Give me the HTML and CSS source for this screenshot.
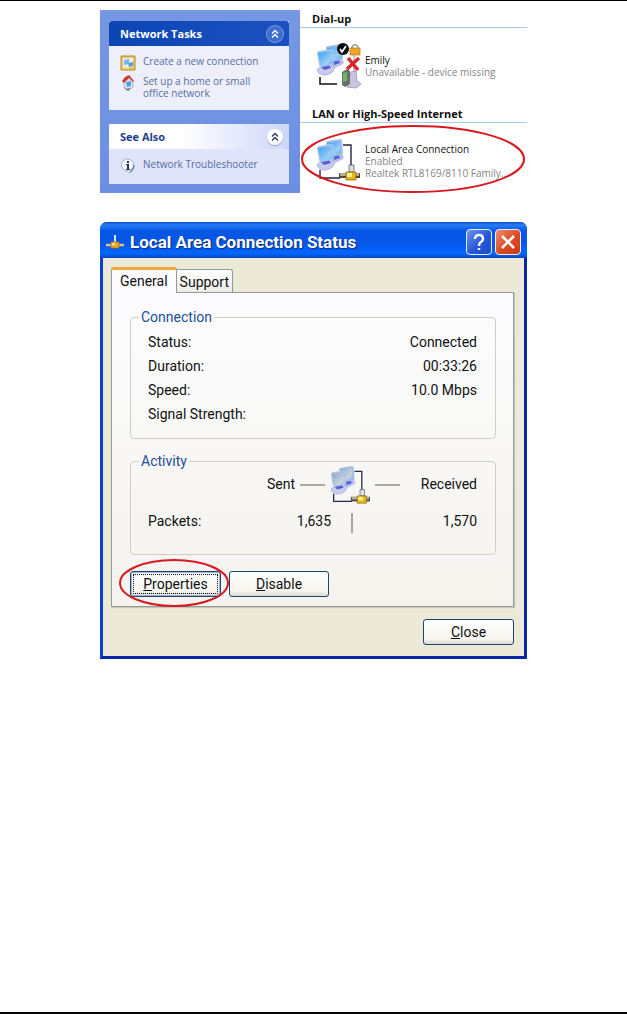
FILE: index.html
```html
<!DOCTYPE html>
<html lang="en">
<head>
<meta charset="utf-8">
<title>Local Area Connection Status</title>
<meta name="viewport" content="width=device-width, initial-scale=1">
<link rel="stylesheet" href="styles.css">
</head>
<body>
<svg class="defs" aria-hidden="true">
  <defs>
    <linearGradient id="shine" x1="0" y1="0" x2="1" y2="1"><stop offset="0" stop-color="#fff" stop-opacity="0"/><stop offset=".7" stop-color="#fff" stop-opacity=".5"/><stop offset="1" stop-color="#fff" stop-opacity=".1"/></linearGradient>
    <symbol id="pcs" viewBox="0 0 46 46">
      <path d="M14 22q0-3 6-4l6-1q4 2 2 5l-8 4z" fill="#b9bdec"/>
      <path d="M17 19l7-1 1 3-6 2z" fill="#5a63d6"/>
      <path d="M11 6q0-2 2-2l12-2q2 0 2 2l1 12q0 2-2 2l-11 2z" fill="#a3bfe6"/>
      <path d="M12 6l13-2 1 12-11 2z" fill="currentColor"/>
      <path d="M12 6l13-2 1 12-11 2z" fill="url(#shine)"/>
      <path d="M2 28q0-2 5-3l9-2q4 1 3 5-2 4-8 5-7 1-9-5z" fill="#c6cbef" stroke="#9aa0d2" stroke-width=".6"/>
      <path d="M6 25l8-2 2 3-7 2z" fill="#5560d2"/>
      <path d="M2 11q0-2 2-2l12-2q2 0 2 2l1 12q0 2-2 2L6 25q-2 0-2-2z" fill="#a9c6ec"/>
      <path d="M3 11l13-2 2 12-12 3z" fill="currentColor"/>
      <path d="M3 11l13-2 2 12-12 3z" fill="url(#shine)"/>
    </symbol>
    <symbol id="plug" viewBox="0 0 46 46">
      <path d="M28 8h8v21M5 33v8h20" fill="none" stroke="#25264a" stroke-width="1.400"/>
      <path d="M34 28h5v7h-5z" fill="#dcdce4" stroke="#555" stroke-width=".7"/>
      <path d="M24 36h21v5H24z" fill="#4d4638"/>
      <path d="M25 36h19v3H25z" fill="#b5ae96"/>
      <path d="M31 35h10v8H31z" fill="#e8b61d" stroke="#80600c" stroke-width=".7"/>
      <path d="M32 36h5v4h-5z" fill="#fff08e"/>
    </symbol>
    <symbol id="chevrons" viewBox="0 0 16 16">
      <path d="M5 7.500l3-3 3 3M5 11.500l3-3 3 3" fill="none" stroke="currentColor" stroke-width="1.400"/>
    </symbol>
  </defs>
</svg>
<main class="page">
  <section class="explorer">
    <aside class="sidebar">
      <section class="card">
        <h2 class="card-title card-title-primary">Network Tasks
          <button class="collapse collapse-primary" aria-label="Collapse Network Tasks"><svg viewBox="0 0 16 16"><use href="#chevrons"/></svg></button>
        </h2>
        <ul class="tasks">
          <li><a class="task" href="#">
            <svg class="task-icon" viewBox="0 0 16 16"><path d="M1 1h14v14H1z" fill="#e9c45c" stroke="#b98a2b"/><path d="M3 3h10v9H3z" fill="#e4f1fb"/><path d="M4 5l5-1v5l-5 1z" fill="#79b2e6"/><path d="M8 8l5-1v4l-4 1z" fill="#5f99d8"/><path d="M3 13h6" stroke="#fff5b5"/></svg>
            Create a new connection</a></li>
          <li><a class="task" href="#">
            <svg class="task-icon" viewBox="0 0 16 16"><path d="M4 6l5-4 4 4v6l-5 3-4-3z" fill="#d8e6f4" stroke="#8296b5" stroke-width=".6"/><path d="M2 6l3-4 4-2 5 6-1 1-4-4-5 5z" fill="#cf3a2c"/><path d="M6 7l5-1v5l-4 1z" fill="#4e9ede"/><path d="M3 12l4 2 4-1-3 3z" fill="#59647a"/></svg>
            <span>Set up a home or small<br>office network</span></a></li>
        </ul>
      </section>
      <section class="card">
        <h2 class="card-title">See Also
          <button class="collapse" aria-label="Collapse See Also"><svg viewBox="0 0 16 16"><use href="#chevrons"/></svg></button>
        </h2>
        <ul class="tasks">
          <li><a class="task" href="#">
            <svg class="task-icon" viewBox="0 0 16 16"><path d="M8 1a6 6 0 0 1 3 11l-1 3-3-2A6 6 0 0 1 8 1z" fill="#f6f8fc" stroke="#a4b0c8"/><path d="M14 7c0 3-1 5-4 7" fill="none" stroke="#5e86c2" stroke-width="1.500"/><path d="M7 3h2v2H7zM6 6h3v5h1v1H6v-1h1V7H6z" fill="#26335e"/></svg>
            Network Troubleshooter</a></li>
        </ul>
      </section>
    </aside>
    <div class="connections">
      <h2 class="group-title">Dial-up</h2>
      <article class="connection">
        <svg class="connection-icon" viewBox="0 0 46 48">
          <use href="#pcs" width="46" height="46"/>
          <path d="M5 35v7h17" fill="none" stroke="#111" stroke-width="1.500"/>
          <path d="M39 13v18" stroke="#888ba5"/>
          <path d="M37 7V5q3-5 6 0v2" fill="none" stroke="#999" stroke-width="1.500"/><path d="M35 6h10v7H35z" fill="#eda724" stroke="#b9771d" stroke-width=".7"/>
          <path d="M36 30l5-1 1 10 4 3-5 4-9-1z" fill="#c9c4e0" stroke="#8e87ad" stroke-width=".7"/>
          <path d="M27 30l5-3 3 2v13l-5 3-3-2z" fill="#67706c"/><path d="M28 31l4-1v9l-4 1z" fill="#6bb85a"/>
          <circle cx="28" cy="7" r="6" fill="#080808"/><path d="M25 7l2 3 4-6" fill="none" stroke="#fff" stroke-width="1.700"/>
          <path d="M33 16l10 12M44 16L32 27" stroke="#d8272b" stroke-width="3.500"/>
        </svg>
        <div class="connection-text"><h3 class="connection-name">Emily</h3><p class="connection-info">Unavailable - device missing</p></div>
      </article>
      <h2 class="group-title">LAN or High-Speed Internet</h2>
      <article class="connection">
        <svg class="connection-icon" viewBox="0 0 46 48"><use href="#pcs" width="46" height="46"/><use href="#plug" width="46" height="46"/></svg>
        <div class="connection-text"><h3 class="connection-name">Local Area Connection</h3><p class="connection-info">Enabled</p><p class="connection-info">Realtek RTL8169/8110 Family...</p></div>
        <svg class="ring ring-connection" viewBox="0 0 224 68" aria-hidden="true"><ellipse cx="112" cy="34" rx="111" ry="33"/></svg>
      </article>
    </div>
  </section>

  <section class="dialog" role="dialog" aria-labelledby="dialog-title">
    <header class="titlebar">
      <svg class="titlebar-icon" viewBox="0 0 18 18"><path d="M9 2v8" stroke="#dfe5ef" stroke-width="2"/><path d="M0 12h18" stroke="#c9c7a0" stroke-width="2.500"/><path d="M5 9h8v6H5z" fill="#efaa23" stroke="#a86a12" stroke-width=".7"/><path d="M6 10h3v2H6z" fill="#ffe896"/></svg>
      <h1 class="dialog-title" id="dialog-title">Local Area Connection Status</h1>
      <button class="caption caption-help" aria-label="Help"><svg viewBox="0 0 24 24"><path d="M8 9q0-4 4-4t4 4q0 2-2 3-2 1-2 4M12 18v2" fill="none" stroke="currentColor" stroke-width="2.400"/></svg></button>
      <button class="caption caption-close" aria-label="Close window"><svg viewBox="0 0 24 24"><path d="M6 6l12 12M18 6L6 18" fill="none" stroke="currentColor" stroke-width="2.600"/></svg></button>
    </header>
    <div class="dialog-body">
      <div class="tabs" role="tablist">
        <button class="tab tab-active" role="tab" aria-selected="true">General</button>
        <button class="tab" role="tab" aria-selected="false">Support</button>
      </div>
      <div class="panel" role="tabpanel">
        <fieldset class="group">
          <legend>Connection</legend>
          <dl class="stats">
            <div class="stat"><dt>Status:</dt><dd>Connected</dd></div>
            <div class="stat"><dt>Duration:</dt><dd>00:33:26</dd></div>
            <div class="stat"><dt>Speed:</dt><dd>10.0 Mbps</dd></div>
            <div class="stat"><dt>Signal Strength:</dt><dd></dd></div>
          </dl>
        </fieldset>
        <fieldset class="group group-activity">
          <legend>Activity</legend>
          <div class="flow">
            <span>Sent</span><span class="dash"></span>
            <svg class="flow-icon" viewBox="1 2 44 42"><use href="#pcs" width="46" height="46"/><use class="flow-plug" href="#plug" width="46" height="46"/></svg>
            <span class="dash"></span><span class="received">Received</span>
          </div>
          <div class="packets"><span class="packets-label">Packets:</span><span>1,635</span><span class="divider"></span><span class="packets-in">1,570</span></div>
        </fieldset>
        <div class="actions">
          <button class="button button-focus"><span><u>P</u>roperties</span></button>
          <button class="button button-wide"><span><u>D</u>isable</span></button>
          <svg class="ring ring-properties" viewBox="0 0 110 48" aria-hidden="true"><ellipse cx="55" cy="24" rx="54" ry="23"/></svg>
        </div>
      </div>
      <footer class="dialog-footer"><button class="button"><span><u>C</u>lose</span></button></footer>
    </div>
  </section>
</main>
</body>
</html>
```
FILE: styles.css
```css
* { box-sizing: border-box; }
body { margin: 0; background: #fff; color: #111; font-family: Roboto, "Liberation Sans", sans-serif; }
h1, h2, h3, p, ul, dl, dd { margin: 0; padding: 0; }
button { margin: 0; padding: 0; border: 0; font: inherit; color: inherit; }
svg { display: block; }
.defs { position: absolute; width: 0; height: 0; }

.page {
  display: flex; flex-direction: column; align-items: center; gap: 29px;
  min-height: 100vh; padding-top: 9px;
  border-top: 1px solid #000; border-bottom: 2px solid #000;
}

.explorer {
  display: grid; grid-template-columns: 200px 1fr;
  width: 100%; max-width: 427px; overflow: hidden;
  font-family: "Open Sans", "Noto Sans", sans-serif; font-size: 10px; line-height: 12px;
}
.sidebar {
  display: flex; flex-direction: column; gap: 14px; padding: 11px 11px 9px 9px;
  background: linear-gradient(#7697e2, #6c8fe4);
}
.card { min-height: 60px; background: #dfe4fa; color: #566d9e; }
.card:first-child { min-height: 89px; background: #edf0fb; }
.card-title {
  display: flex; align-items: center; justify-content: space-between;
  height: 25px; padding: 0 6px 0 11px; border-radius: 3px 3px 0 0;
  background: linear-gradient(90deg, #fff 40%, #cdd6f7); color: #1d3f8f;
  font-size: 11px; font-weight: 700;
}
.card-title-primary { background: linear-gradient(90deg, #0b46b4, #1c50bf); color: #fff; }
.collapse { width: 16px; height: 16px; border-radius: 50%; background: #fff; color: #26375f; box-shadow: 0 1px 1px #98a4c9; }
.collapse-primary { background: #3e6dce; color: #fff; box-shadow: 0 0 0 1px #7f9fe3; }
.tasks { display: grid; gap: 4px; padding: 9px 11px 8px; list-style: none; }
.task { display: grid; grid-template-columns: 16px 1fr; gap: 7px; color: inherit; text-decoration: none; }
.task-icon { width: 16px; height: 16px; }

.connections { background: #fff; }
.group-title {
  height: 18px; padding-left: 12px; border-bottom: 1px solid #a9c9e8;
  color: #111; font-size: 11px; font-weight: 700; line-height: 18px;
}
.connection { position: relative; display: flex; gap: 4px; height: 77px; padding: 14px 0 0 15px; }
.connection:last-child { height: 70px; }
.connection-icon { flex: none; width: 46px; height: 48px; color: #37a0f0; }
.connection-text { padding-top: 12px; white-space: nowrap; }
.connection:last-child .connection-text { padding-top: 6px; }
.connection-name { color: #111; font-size: 10px; font-weight: 400; }
.connection-info { color: #858585; }

.ring { position: absolute; fill: none; stroke: #d71920; stroke-width: 2; pointer-events: none; }
.ring-connection { top: 2px; left: 1px; width: 224px; height: 68px; }

.dialog {
  width: 100%; max-width: 427px; border: solid #0a3fd0; border-width: 0 3px 3px; border-right-color: #0527a8; border-bottom-color: #0527a8;
  border-radius: 7px 7px 0 0; background: #ece9d8; font-size: 14px; line-height: 16px;
}
.titlebar {
  display: flex; align-items: center; gap: 5px; height: 36px; margin: 0 -3px; padding: 4px 6px 0 6px;
  border-radius: 7px 7px 0 0; color: #fff;
  background: linear-gradient(#0a49c8, #2a7cf8 8%, #0756e4 25%, #0557ea 60%, #0566fb 88%, #0444c4);
}
.titlebar-icon { width: 18px; height: 18px; }
.dialog-title { flex: 1; margin-left: 1px; font-size: 17px; line-height: 20px; font-weight: 700; text-shadow: 1px 1px 1px #0a2a80; }
.caption { width: 26px; height: 26px; border: 1px solid #e8effc; border-radius: 4px; color: #fff; }
.caption-help { margin-right: -2px; background: linear-gradient(135deg, #6f97f2, #2757d8 55%, #1c4cd0); }
.caption-close { background: linear-gradient(135deg, #ee8a6c, #dc4a22 55%, #c93b16); }

.dialog-body { padding: 9px 10px 11px 8px; }
.tabs { display: flex; align-items: flex-end; }
.tab { height: 23px; padding: 2px 3px 0; border: solid #919b9c; border-width: 1px 1px 0 0; border-radius: 0 3px 0 0; background: linear-gradient(#fff, #ecebe6); }
.tab-active {
  position: relative; height: 26px; margin-bottom: -1px; padding: 0 8px 1px; border: 1px solid #919b9c;
  border-top: 3px solid #eda73b; border-bottom: 0; border-radius: 3px 3px 0 0; background: #fcfcfe;
}
.panel { padding: 16px 17px 9px 18px; border: 1px solid #919b9c; box-shadow: 1px 1px 1px #c9c6b7; background: linear-gradient(#fcfcfe, #f4f3ee); }
.group { min-width: 0; margin: 0 0 14px; padding: 5px 18px 12px 17px; border: 1px solid #d0d0bf; border-radius: 4px; }
.group legend { margin-left: -9px; padding: 0 2px; color: #20509a; }
.stat { display: flex; justify-content: space-between; line-height: 24px; }
.group-activity { margin-bottom: 16px; padding-top: 0; padding-bottom: 21px; }
.flow { display: flex; justify-content: flex-end; gap: 5px; height: 40px; line-height: 30px; }
.flow-icon { width: 40px; height: 40px; margin-top: -4px; color: #93a6c2; }
.dash { width: 25px; height: 2px; margin-top: 15px; background: #aca899; }
.received { width: 72px; text-align: right; }
.packets { display: flex; line-height: 24px; }
.packets-label { flex: 1; }
.divider { width: 2px; height: 20px; margin: 4px 0 0 20px; background: #aca899; }
.packets-in { width: 124px; text-align: right; }

.actions { position: relative; display: flex; gap: 8px; }
.button { width: 91px; height: 26px; padding: 2px; border: 1px solid #1c4670; border-radius: 3px; background: linear-gradient(#fff, #f5f4ef 80%, #dcd8cc); }
.button span { display: block; height: 20px; line-height: 20px; }
.button-wide { width: 100px; }
.button-focus { box-shadow: inset 0 0 0 1px #9db8dc; }
.button-focus span { border: 1px dotted #111; line-height: 18px; }
.ring-properties { top: -12px; left: -11px; width: 110px; height: 48px; }
.dialog-footer { display: flex; justify-content: flex-end; padding-top: 12px; }
```
